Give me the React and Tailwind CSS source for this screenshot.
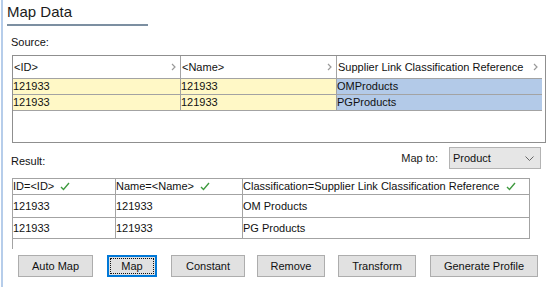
import React from 'react';

const font = { fontFamily: '"Liberation Sans", Arial, sans-serif' };

function Chevron() {
  return (
    <svg width="5" height="8" viewBox="0 0 5 8" className="shrink-0">
      <path d="M1 1 L4 4 L1 7" fill="none" stroke="#9a9a9a" strokeWidth="1.2" />
    </svg>
  );
}

function Check() {
  return (
    <svg width="10" height="9" viewBox="0 0 10 9" className="ml-[6px] shrink-0">
      <path d="M1 5 L3.5 7.5 L9 1" fill="none" stroke="#3f9a3f" strokeWidth="1.4" />
    </svg>
  );
}

const sourceRows = [
  ['121933', '121933', 'OMProducts'],
  ['121933', '121933', 'PGProducts'],
];

const resultRows = [
  ['121933', '121933', 'OM Products'],
  ['121933', '121933', 'PG Products'],
];

const buttons = [
  { label: 'Auto Map', w: 'w-[75px]', ml: 'ml-[18px]' },
  { label: 'Map', w: 'w-[50px]', ml: 'ml-[14px]', active: true },
  { label: 'Constant', w: 'w-[74px]', ml: 'ml-[14px]' },
  { label: 'Remove', w: 'w-[68px]', ml: 'ml-[12px]' },
  { label: 'Transform', w: 'w-[78px]', ml: 'ml-[13px]' },
  { label: 'Generate Profile', w: 'w-[108px]', ml: 'ml-[14px]' },
];

export default function App() {
  return (
    <div className="w-[549px] h-[287px] bg-white overflow-hidden text-[11px] text-[#111]" style={font}>
      <div className="ml-[1px] h-full border-l-2 border-[#b6cdea] relative">
        {/* title */}
        <div className="pl-[4px] pt-[3px]">
          <div className="text-[15px] leading-[18px] text-[#1b1b1b]">Map Data</div>
          <div className="mt-[3px] w-[141px] h-[2px] bg-[#7c8fa1]" />
        </div>

        <div className="pl-[8px] mt-[10px] leading-[13px]">Source:</div>

        {/* source table */}
        <div className="ml-[9px] mt-[6px] w-[534px] h-[88px] border border-[#8f8f8f]">
          <div className="w-[529px]">
            <div className="flex h-[23px] border-b border-[#a3a3a3] bg-white">
              <div className="w-[168px] flex items-center justify-between pl-[1px] pr-[4px] border-r border-[#a3a3a3]">
                <span>&lt;ID&gt;</span>
                <Chevron />
              </div>
              <div className="w-[156px] flex items-center justify-between pl-[1px] pr-[4px] border-r border-[#a3a3a3]">
                <span>&lt;Name&gt;</span>
                <Chevron />
              </div>
              <div className="flex-1 flex items-center justify-between pl-[1px] pr-[4px]">
                <span>Supplier Link Classification Reference</span>
                <Chevron />
              </div>
            </div>
            {sourceRows.map((r, i) => (
              <div key={i} className="flex h-[16px] border-b border-[#a3a3a3] leading-[15px]">
                <div className="w-[168px] bg-[#fff8c6] border-r border-[#a3a3a3]">{r[0]}</div>
                <div className="w-[156px] bg-[#fff8c6] border-r border-[#a3a3a3]">{r[1]}</div>
                <div className="flex-1 bg-[#b3cae8]">{r[2]}</div>
              </div>
            ))}
          </div>
        </div>

        {/* result label + map to */}
        <div className="flex items-center mt-[4px] h-[22px]">
          <div className="pl-[8px] pt-[6px]">Result:</div>
          <div className="ml-auto mr-[8px] flex items-center">
            <span className="text-[#1a1a1a]">Map to:</span>
            <div className="ml-[11px] w-[92px] h-[22px] bg-[#e6e6e6] border border-[#b3b3b3] flex items-center justify-between pl-[3px] pr-[6px]">
              <span>Product</span>
              <svg width="9" height="5" viewBox="0 0 9 5">
                <path d="M0.5 0.5 L4.5 4.5 L8.5 0.5" fill="none" stroke="#666" strokeWidth="1" />
              </svg>
            </div>
          </div>
        </div>

        {/* result table */}
        <div className="ml-[9px] mt-[9px] w-[518px]">
          <div className="border border-[#a3a3a3]">
            <div className="flex h-[16px] border-b border-[#a3a3a3] leading-[15px]">
              <div className="w-[103px] flex items-center border-r border-[#a3a3a3]">
                <span>ID=&lt;ID&gt;</span>
                <Check />
              </div>
              <div className="w-[127px] flex items-center border-r border-[#a3a3a3]">
                <span>Name=&lt;Name&gt;</span>
                <Check />
              </div>
              <div className="flex-1 flex items-center">
                <span>Classification=Supplier Link Classification Reference</span>
                <Check />
              </div>
            </div>
            {resultRows.map((r, i) => (
              <div
                key={i}
                className={`flex items-center ${i === 0 ? 'h-[23px] border-b border-[#a3a3a3]' : 'h-[20px]'}`}
              >
                <div className="w-[103px] h-full flex items-center border-r border-[#a3a3a3]">{r[0]}</div>
                <div className="w-[127px] h-full flex items-center border-r border-[#a3a3a3]">{r[1]}</div>
                <div className="flex-1 h-full flex items-center">{r[2]}</div>
              </div>
            ))}
          </div>
          <div className="w-[1px] h-[10px] bg-[#a3a3a3]" />
        </div>

        {/* buttons */}
        <div className="flex mt-[6px] -ml-[3px]">
          {buttons.map((b) => (
            <div
              key={b.label}
              className={`${b.w} ${b.ml} h-[22px] flex items-center justify-center bg-[#e1e1e1] ${
                b.active ? 'border-2 border-[#0078d7] p-[1px]' : 'border border-[#adadad]'
              }`}
            >
              {b.active ? (
                <div className="w-full h-full border border-dotted border-[#111] flex items-center justify-center">
                  {b.label}
                </div>
              ) : (
                b.label
              )}
            </div>
          ))}
        </div>
      </div>
    </div>
  );
}
